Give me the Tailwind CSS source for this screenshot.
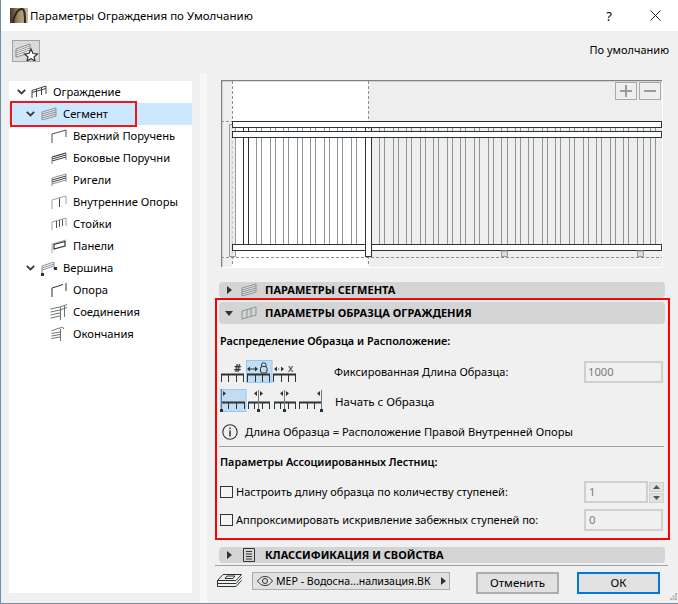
<!DOCTYPE html>
<html lang="ru">
<head>
  <meta charset="UTF-8" />
  <title>Параметры Ограждения по Умолчанию</title>
  <script src="https://cdn.jsdelivr.net/npm/@tailwindcss/browser@4"></script>
</head>
<body class="bg-[#f0f0f0] text-black font-['Noto_Sans','Liberation_Sans',sans-serif] text-[11.2px] leading-4 overflow-hidden">
<div class="relative w-[678px] h-[604px] border-l border-b border-[#6f8fae] overflow-hidden">

  <!-- заголовок окна -->
  <div class="h-[31px] bg-white flex items-center pl-[9px]">
    <svg width="18" height="15" viewBox="0 0 18 15">
      <defs><linearGradient id="logo" x1="0" x2="1" y1="0" y2="0"><stop offset="0" stop-color="#3d3527"/><stop offset="0.5" stop-color="#a58f6c"/><stop offset="1" stop-color="#c9b795"/></linearGradient></defs>
      <rect width="18" height="15" fill="url(#logo)"/>
      <path d="M3 15 C4 6 8 1 12 1 C15 1 15 8 15 15" fill="none" stroke="#2f2a20" stroke-width="2"/>
    </svg>
    <span class="ml-[2px] text-[11.5px]">Параметры Ограждения по Умолчанию</span>
    <span class="ml-auto mr-[38px] text-[13px]">?</span>
    <svg class="mr-[17px]" width="11" height="11" viewBox="0 0 11 11"><path d="M.5.5l10 10M10.5.5l-10 10" stroke="#222" fill="none"/></svg>
  </div>

  <!-- панель над деревом -->
  <div class="h-[42px] flex items-start pl-[11px] pt-[9px]">
    <div class="w-[28px] h-[22px] bg-[#dadada] border border-[#a3a3a3]">
      <svg width="26" height="20" viewBox="0 0 26 20">
        <path d="M3 8 L17 3 V12 L3 16Z" fill="#f2f2f2" stroke="#8a8a8a"/>
        <path d="M3 10 L17 5 M3 12 L17 7 M3 14 L17 9" stroke="#9a9a9a" fill="none"/>
        <path d="M18 8l2 4.500 4.500.5-3.500 3 1 4-4-2.200-4 2.200 1-4-3.500-3 4.500-.5z" fill="#fff" stroke="#2b3336" stroke-width="1.200"/>
      </svg>
    </div>
    <span class="ml-auto mr-[9px] mt-[2px] text-[11px]">По умолчанию</span>
  </div>

  <div class="flex">
    <!-- дерево -->
    <div class="ml-[8px] mt-[8px] w-[183px] h-[512px] bg-white">
      <div class="h-[22px] flex items-center pl-[8px]">
        <svg width="9" height="6" viewBox="0 0 9 6"><path d="M.8.8l3.700 3.700L8.200.8" fill="none" stroke="#3a3a3a" stroke-width="1.800"/></svg>
        <svg class="ml-[5px]" width="16" height="14" viewBox="0 0 16 14"><path d="M1 13V5.500L15 1M1 7.500L15 3.500M5.500 12V4M10.500 10V2.500M15 9V1" fill="none" stroke="#3b4347"/></svg>
        <span class="ml-[6px]">Ограждение</span>
      </div>
      <div class="h-[22px] flex items-center pl-[17px] bg-[#cce8ff]">
        <svg width="9" height="6" viewBox="0 0 9 6"><path d="M.8.8l3.700 3.700L8.200.8" fill="none" stroke="#3a3a3a" stroke-width="1.800"/></svg>
        <svg class="ml-[6px]" width="16" height="14" viewBox="0 0 16 14"><path d="M1 5L15 1V9L1 13Z" fill="#e4e9ec" stroke="#8b9498"/><path d="M1 7L15 3M1 9L15 5M1 11L15 7" stroke="#8b9498" fill="none"/></svg>
        <span class="ml-[6px]">Сегмент</span>
      </div>
      <div class="h-[22px] flex items-center pl-[42px]">
        <svg width="16" height="14" viewBox="0 0 16 14"><path d="M1 14V5L15 1V8" fill="none" stroke="#4b5357"/></svg>
        <span class="ml-[6px]">Верхний Поручень</span>
      </div>
      <div class="h-[22px] flex items-center pl-[42px]">
        <svg width="16" height="14" viewBox="0 0 16 14"><path d="M1 13V6L15 2V9" fill="none" stroke="#7c8589"/><path d="M1 6L15 2M1 8L15 4M1 10L15 6" stroke="#3b4347" fill="none"/></svg>
        <span class="ml-[6px]">Боковые Поручни</span>
      </div>
      <div class="h-[22px] flex items-center pl-[42px]">
        <svg width="16" height="14" viewBox="0 0 16 14"><path d="M1 13V5L15 1V9M1 11L15 7" fill="none" stroke="#8b9498"/><path d="M1 7L15 3M1 9L15 5" stroke="#3b4347" fill="none"/></svg>
        <span class="ml-[6px]">Ригели</span>
      </div>
      <div class="h-[22px] flex items-center pl-[42px]">
        <svg width="16" height="14" viewBox="0 0 16 14"><path d="M1 14V5L15 1V9" fill="none" stroke="#9aa2a6"/><path d="M8.500 3.500V12" stroke="#3b4347" fill="none"/></svg>
        <span class="ml-[6px]">Внутренние Опоры</span>
      </div>
      <div class="h-[22px] flex items-center pl-[42px]">
        <svg width="16" height="14" viewBox="0 0 16 14"><path d="M1 13V5L15 1V9" fill="none" stroke="#9aa2a6"/><path d="M5.500 4V11M8.500 3V10M11.500 2.500V9" stroke="#4b5357" fill="none"/></svg>
        <span class="ml-[6px]">Стойки</span>
      </div>
      <div class="h-[22px] flex items-center pl-[42px]">
        <svg width="16" height="14" viewBox="0 0 16 14"><path d="M1 14V5L15 1" fill="none" stroke="#9aa2a6"/><path d="M3 5.500L14 2.500V7L3 10Z" fill="#fff" stroke="#2b3336" stroke-width="1.200"/></svg>
        <span class="ml-[6px]">Панели</span>
      </div>
      <div class="h-[22px] flex items-center pl-[17px]">
        <svg width="9" height="6" viewBox="0 0 9 6"><path d="M.8.8l3.700 3.700L8.200.8" fill="none" stroke="#3a3a3a" stroke-width="1.800"/></svg>
        <svg class="ml-[6px]" width="16" height="16" viewBox="0 0 16 16"><path d="M1 14V6L13 2V9M1 8L13 4M1 10L13 6" fill="none" stroke="#8b9498"/><rect x="0" y="13" width="3" height="3" fill="#2b3336"/><rect x="13" y="7" width="3" height="3" fill="#2b3336"/></svg>
        <span class="ml-[6px]">Вершина</span>
      </div>
      <div class="h-[22px] flex items-center pl-[42px]">
        <svg width="16" height="14" viewBox="0 0 16 14"><path d="M1 14V5L12 1.500" fill="none" stroke="#2b3336"/><path d="M15 0V8" stroke="#2b3336" fill="none"/></svg>
        <span class="ml-[6px]">Опора</span>
      </div>
      <div class="h-[22px] flex items-center pl-[41px]">
        <svg width="17" height="16" viewBox="0 0 17 16"><path d="M.5 5L10 3M.5 8L10 6M.5 11L10 9M.5 14L10 12M10.500 3V16M14.500 2V13M10 3L17 .5M10 6L17 3.500" fill="none" stroke="#5b6367" stroke-width=".9"/></svg>
        <span class="ml-[6px]">Соединения</span>
      </div>
      <div class="h-[22px] flex items-center pl-[42px]">
        <svg width="16" height="14" viewBox="0 0 16 14"><path d="M.5 4C5 2 9 .5 12 .5L13 2M.5 6.500L9 5M.5 9L9 7.500M.5 11.500L9 10M9.500 2V14" fill="none" stroke="#5b6367" stroke-width=".9"/></svg>
        <span class="ml-[6px]">Окончания</span>
      </div>
    </div>

    <!-- разделитель -->
    <div class="ml-[8px] w-[7px] h-[530px] bg-[#f7f7f7]"></div>

    <!-- правая колонка -->
    <div class="pl-[12px] w-[458px]">
      <svg id="preview" class="block ml-[2px] mt-[7px]" width="443" height="188" viewBox="221 80 443 188">
        <rect x="221" y="80" width="443" height="188" fill="#eeeeee"/>
        <rect x="232" y="81" width="136.500" height="186" fill="#fff"/>
        <path d="M221 80.500H662M221.500 80V267" stroke="#808080" stroke-width="1.500" fill="none"/>
        <path d="M662.500 81V267.500H222" stroke="#fff" fill="none"/>
        <path d="M232.500 81V266M368.500 81V266M221 121.500H232M221 257.500H662" stroke="#8e8e8e" stroke-dasharray="3 2" fill="none"/>
        <g id="bars" stroke="#8e9599"></g>
        <rect x="229.500" y="124.500" width="6" height="132" fill="#e4e4e4" fill-opacity=".7" stroke="#9a9a9a"/>
        <rect x="501.500" y="127.500" width="6" height="129" fill="#eeeeee" stroke="#8e9599"/>
        <rect x="637.500" y="127.500" width="6" height="129" fill="#eeeeee" stroke="#8e9599"/>
        <path d="M243.500 127V244M248.500 127V244" stroke="#2b3336" fill="none"/>
        <rect x="232.500" y="121.500" width="429" height="6" fill="#fff" stroke="#2b3336"/>
        <rect x="232.500" y="131.500" width="429" height="6" fill="#fff" stroke="#2b3336"/>
        <rect x="232.500" y="244.500" width="429" height="6" fill="#fff" stroke="#2b3336"/>
        <path d="M243.500 127V131M248.500 127V131M365.500 127V131M371.500 127V131" stroke="#2b3336" fill="none"/>
        <rect x="365.500" y="137.500" width="6" height="119" fill="#fff" stroke="#2b3336"/>
        <rect x="501.500" y="251" width="6" height="5.500" fill="#dcdcdc" stroke="#9a9a9a"/>
        <rect x="637.500" y="251" width="6" height="5.500" fill="#dcdcdc" stroke="#9a9a9a"/>
        <rect x="615.500" y="82.500" width="21" height="17" fill="#eee" stroke="#a9a9a9"/>
        <path d="M626 85V97M620 91H632" stroke="#9a9a9a" stroke-width="2" fill="none"/>
        <rect x="639.500" y="82.500" width="21" height="17" fill="#eee" stroke="#a9a9a9"/>
        <path d="M644 91H656" stroke="#9a9a9a" stroke-width="2" fill="none"/>
      </svg>

      <!-- параметры сегмента -->
      <div class="mt-[14px] w-[446px] h-[16px] bg-[#d4d4d4] rounded-sm flex items-center">
        <svg class="ml-[8px]" width="5" height="8" viewBox="0 0 5 8"><path d="M0 0L5 4L0 8Z" fill="#333"/></svg>
        <svg class="ml-[9px]" width="16" height="14" viewBox="0 0 16 14"><path d="M1 5L15 1V9L1 13Z" fill="#e4e4e4" stroke="#8b9498"/><path d="M1 7L15 3M1 9L15 5M1 11L15 7" stroke="#8b9498" fill="none"/></svg>
        <span class="ml-[8px] font-bold text-[11px]">ПАРАМЕТРЫ СЕГМЕНТА</span>
      </div>

      <!-- параметры образца -->
      <div class="mt-[4px] w-[446px] h-[22px] bg-[#d4d4d4] rounded-sm flex items-center">
        <svg class="ml-[6px]" width="8" height="5" viewBox="0 0 8 5"><path d="M0 0H8L4 5Z" fill="#333"/></svg>
        <svg class="ml-[8px]" width="16" height="14" viewBox="0 0 16 14"><path d="M1 13V5L15 1V9L1 13M6 3.500V11.500M10 2.500V10.500" fill="none" stroke="#8b9498"/></svg>
        <span class="ml-[8px] font-bold text-[11px]">ПАРАМЕТРЫ ОБРАЗЦА ОГРАЖДЕНИЯ</span>
      </div>

      <div class="mt-[9px] ml-[1px] font-semibold text-[10.9px]">Распределение Образца и Расположение:</div>

      <div class="mt-[11px] flex h-[23px] items-start">
        <svg class="ml-[1px]" width="80" height="23" viewBox="220 360 80 23">
          <rect x="246.500" y="360.500" width="25.500" height="22" fill="#c2dcf2" stroke="#90c8f6"/>
          <path d="M221.500 374V382M228.500 374V382M236.500 374V382M243.500 374V382" stroke="#2b3336" fill="none"/>
          <path d="M221 374.500H244" stroke="#2b3336" stroke-width="2"/>
          <path d="M247.500 374V382M255.500 374V382M262.500 374V382M269.500 374V382" stroke="#2b3336" fill="none"/>
          <path d="M247 374.500H270" stroke="#2b3336" stroke-width="2"/>
          <path d="M273.500 374V382M281.500 374V382M288.500 374V382M295.500 374V382" stroke="#2b3336" fill="none"/>
          <path d="M273 374.500H296" stroke="#2b3336" stroke-width="2"/>
          <text x="234" y="372" font-size="11" font-weight="700" fill="#2b3336" font-family="Noto Sans">#</text>
          <path d="M250 369H255" stroke="#2b3336"/><path d="M247 369l3-2.500v5zM258 369l-3-2.500v5z" fill="#2b3336"/>
          <rect x="260.500" y="366.500" width="6.500" height="6.500" rx="2" fill="none" stroke="#2b3336"/><path d="M261.500 366.500V365a2 2 0 0 1 4.500 0v1.500" fill="none" stroke="#2b3336"/>
          <path d="M276 369h3" stroke="#2b3336" stroke-dasharray="1 1"/><path d="M274 369l3-2.500v5zM284 369l-3-2.500v5z" fill="#2b3336"/>
          <text x="288" y="372" font-size="10" fill="#2b3336" font-family="Noto Sans">x</text>
        </svg>
        <span class="ml-[34px] mt-[4px] text-[11px]">Фиксированная Длина Образца:</span>
        <div class="ml-auto mr-[2px] mt-[1px] w-[79px] h-[22px] border-2 border-[#cfcfcf] text-[#7a7a7a] pl-[2px] leading-[18px]">1000</div>
      </div>

      <div class="mt-[6px] flex h-[24px] items-start">
        <svg class="ml-[1px]" width="104" height="24" viewBox="220 389 104 24">
          <rect x="220.500" y="389.500" width="25.500" height="22" fill="#c2dcf2" stroke="#90c8f6"/>
          <path d="M228.500 402V409M236.500 402V409M244.500 402V409" stroke="#2b3336" fill="none"/>
          <path d="M221 402.500H245" stroke="#2b3336" stroke-width="2"/>
          <path d="M221.500 389V410" stroke="#6f7a80"/><rect x="220" y="409" width="3" height="3" fill="#2b3336"/>
          <path d="M223 391l3 2.500-3 2.500z" fill="#2b3336"/>
          <path d="M248.500 402V409M254.500 402V409M262.500 402V409M269.500 402V409" stroke="#2b3336" fill="none"/>
          <path d="M248 402.500H270" stroke="#2b3336" stroke-width="2"/>
          <path d="M258.500 390V409" stroke="#6f7a80"/><rect x="257" y="409" width="3" height="3" fill="#2b3336"/>
          <path d="M257 391l-3 2.500 3 2.500zM260 391l3 2.500-3 2.500z" fill="#2b3336"/>
          <path d="M274.500 402V409M280.500 402V409M288.500 402V409M295.500 402V409" stroke="#2b3336" fill="none"/>
          <path d="M274 402.500H296" stroke="#2b3336" stroke-width="2"/>
          <path d="M284.500 390V409" stroke="#6f7a80"/><rect x="283" y="409" width="3" height="3" fill="#2b3336"/>
          <path d="M283 391l-3 2.500 3 2.500zM286 391l3 2.500-3 2.500z" fill="#2b3336"/>
          <path d="M299.500 402V409M307.500 402V409M314.500 402V409" stroke="#2b3336" fill="none"/>
          <path d="M299 402.500H322" stroke="#2b3336" stroke-width="2"/>
          <path d="M321.500 390V409" stroke="#6f7a80"/><rect x="320" y="409" width="3" height="3" fill="#2b3336"/>
          <path d="M320 391l-3 2.500 3 2.500z" fill="#2b3336"/>
        </svg>
        <span class="ml-[11px] mt-[5px] text-[11.5px]">Начать с Образца</span>
      </div>

      <div class="mt-[11px] flex h-[16px] items-center">
        <svg class="ml-[3px]" width="16" height="16" viewBox="0 0 16 16"><circle cx="8" cy="8" r="7.200" fill="none" stroke="#333" stroke-width="1.100"/><path d="M8 6.500V12.500M8 3.500V5.200" stroke="#333" stroke-width="1.500"/></svg>
        <span class="ml-[7px]">Длина Образца = Расположение Правой Внутренней Опоры</span>
      </div>

      <div class="mt-[6px] w-[445px] h-px bg-[#a0a0a0]"></div>

      <div class="mt-[7px] ml-[1px] font-semibold text-[10.8px]">Параметры Ассоциированных Лестниц:</div>

      <div class="mt-[11px] h-[22px] flex items-center">
        <div class="ml-[1px] w-[13px] h-[12px] border border-[#333] bg-[#f4f4f4]"></div>
        <span class="ml-[3px] text-[11px]">Настроить длину образца по количеству ступеней:</span>
        <div class="ml-auto w-[64px] h-[22px] border-2 border-[#cfcfcf] text-[#7a7a7a] pl-[3px] leading-[18px]">1</div>
        <div class="ml-[1px] mr-[1px] w-[15px] flex flex-col gap-[1px]">
          <div class="h-[10px] bg-[#e1e1e1] border border-[#d0d0d0] flex items-center justify-center"><svg width="7" height="4" viewBox="0 0 7 4"><path d="M0 4L3.500 0L7 4Z" fill="#555"/></svg></div>
          <div class="h-[10px] bg-[#e1e1e1] border border-[#d0d0d0] flex items-center justify-center"><svg width="7" height="4" viewBox="0 0 7 4"><path d="M0 0H7L3.500 4Z" fill="#555"/></svg></div>
        </div>
      </div>

      <div class="mt-[6px] h-[22px] flex items-center">
        <div class="ml-[1px] w-[13px] h-[12px] border border-[#333] bg-[#f4f4f4]"></div>
        <span class="ml-[3px] text-[11px]">Аппроксимировать искривление забежных ступеней по:</span>
        <div class="ml-auto mr-[2px] w-[79px] h-[22px] border-2 border-[#cfcfcf] text-[#7a7a7a] pl-[3px] leading-[18px]">0</div>
      </div>

      <!-- классификация -->
      <div class="mt-[16px] w-[446px] h-[16px] bg-[#d4d4d4] rounded-sm flex items-center">
        <svg class="ml-[8px]" width="5" height="8" viewBox="0 0 5 8"><path d="M0 0L5 4L0 8Z" fill="#333"/></svg>
        <svg class="ml-[11px]" width="12" height="14" viewBox="0 0 12 14"><path d="M.5.500H11.500V13.500H.5ZM3 3.500H9M3 6H9M3 8.500H9M3 11H9" fill="none" stroke="#333"/></svg>
        <span class="ml-[10px] font-bold text-[11px]">КЛАССИФИКАЦИЯ И СВОЙСТВА</span>
      </div>

      <div class="mt-[2px] -ml-[4px] w-[453px] h-px bg-[#a0a0a0]"></div>

      <!-- низ окна -->
      <div class="mt-[6px] -ml-[2px] flex items-start">
        <svg class="mt-[2px]" width="25" height="15" viewBox="0 0 25 15"><path d="M6 .5H24.500L19 6.500H.5ZM.5 6.500V12.500M.5 9.500H19L24.500 3.500M.5 12.500H19L24.500 6.500" fill="none" stroke="#2b3336"/><path d="M10 2H18L16 4.500H8Z" fill="none" stroke="#2b3336"/></svg>
        <div class="ml-[10px] w-[198px] h-[18px] bg-[#e1e1e1] border border-[#adadad] flex items-center">
          <svg class="ml-[4px] shrink-0" width="16" height="10" viewBox="0 0 16 10"><path d="M.5 5C3 1.500 5.500.5 8 .5S13 1.500 15.500 5C13 8.500 10.500 9.500 8 9.500S3 8.500.5 5Z" fill="none" stroke="#333"/><circle cx="8" cy="5" r="2.500" fill="none" stroke="#333"/></svg>
          <span class="ml-[3px] whitespace-nowrap text-[10.6px]">МЕР - Водосна...нализация.ВК</span>
          <svg class="ml-auto mr-[3px] shrink-0" width="5" height="8" viewBox="0 0 5 8"><path d="M0 0L5 4L0 8Z" fill="#333"/></svg>
        </div>
        <div class="ml-[26px] w-[83px] h-[22px] bg-[#e1e1e1] border-2 border-[#adadad] flex items-center justify-center text-[11.5px]">Отменить</div>
        <div class="ml-[18px] w-[83px] h-[22px] bg-[#e1e1e1] border-2 border-[#0078d7] flex items-center justify-center text-[11.5px]">ОК</div>
      </div>
    </div>
  </div>

  <!-- красные рамки-пометки -->
  <div class="absolute left-[9px] top-[101px] w-[127px] h-[26px] border-2 border-[#f0141e]"></div>
  <div class="absolute left-[214px] top-[298px] w-[455px] h-[242px] border-2 border-[#ff0000]"></div>

  <!-- уголок изменения размера -->
  <svg class="absolute left-[669px] top-[593px]" width="8" height="8" viewBox="0 0 8 8"><path d="M5 0h2v2H5zM2.500 2.500h2v2h-2zM5 2.500h2v2H5zM0 5h2v2H0zM2.500 5h2v2h-2zM5 5h2v2H5z" fill="#b5b5b5"/></svg>
</div>

<script>
  // стойки ограждения
  const bars = document.getElementById("bars");
  const xs = [235.5];
  for (let k = 0; k < 8; k++) {
    const x = Math.round(256 + k * 13.57);
    xs.push(x + 0.5, x + 5.5);
  }
  for (let k = 0; k < 21; k++) {
    const x = Math.round(379 + k * 13.57);
    xs.push(x + 0.5, x + 5.5);
  }
  let html = "";
  xs.filter(x => x < 661).forEach(x => {
    html += `<path d="M${x} 127V244"/>`;
  });
  bars.innerHTML = html;
</script>
</body>
</html>
